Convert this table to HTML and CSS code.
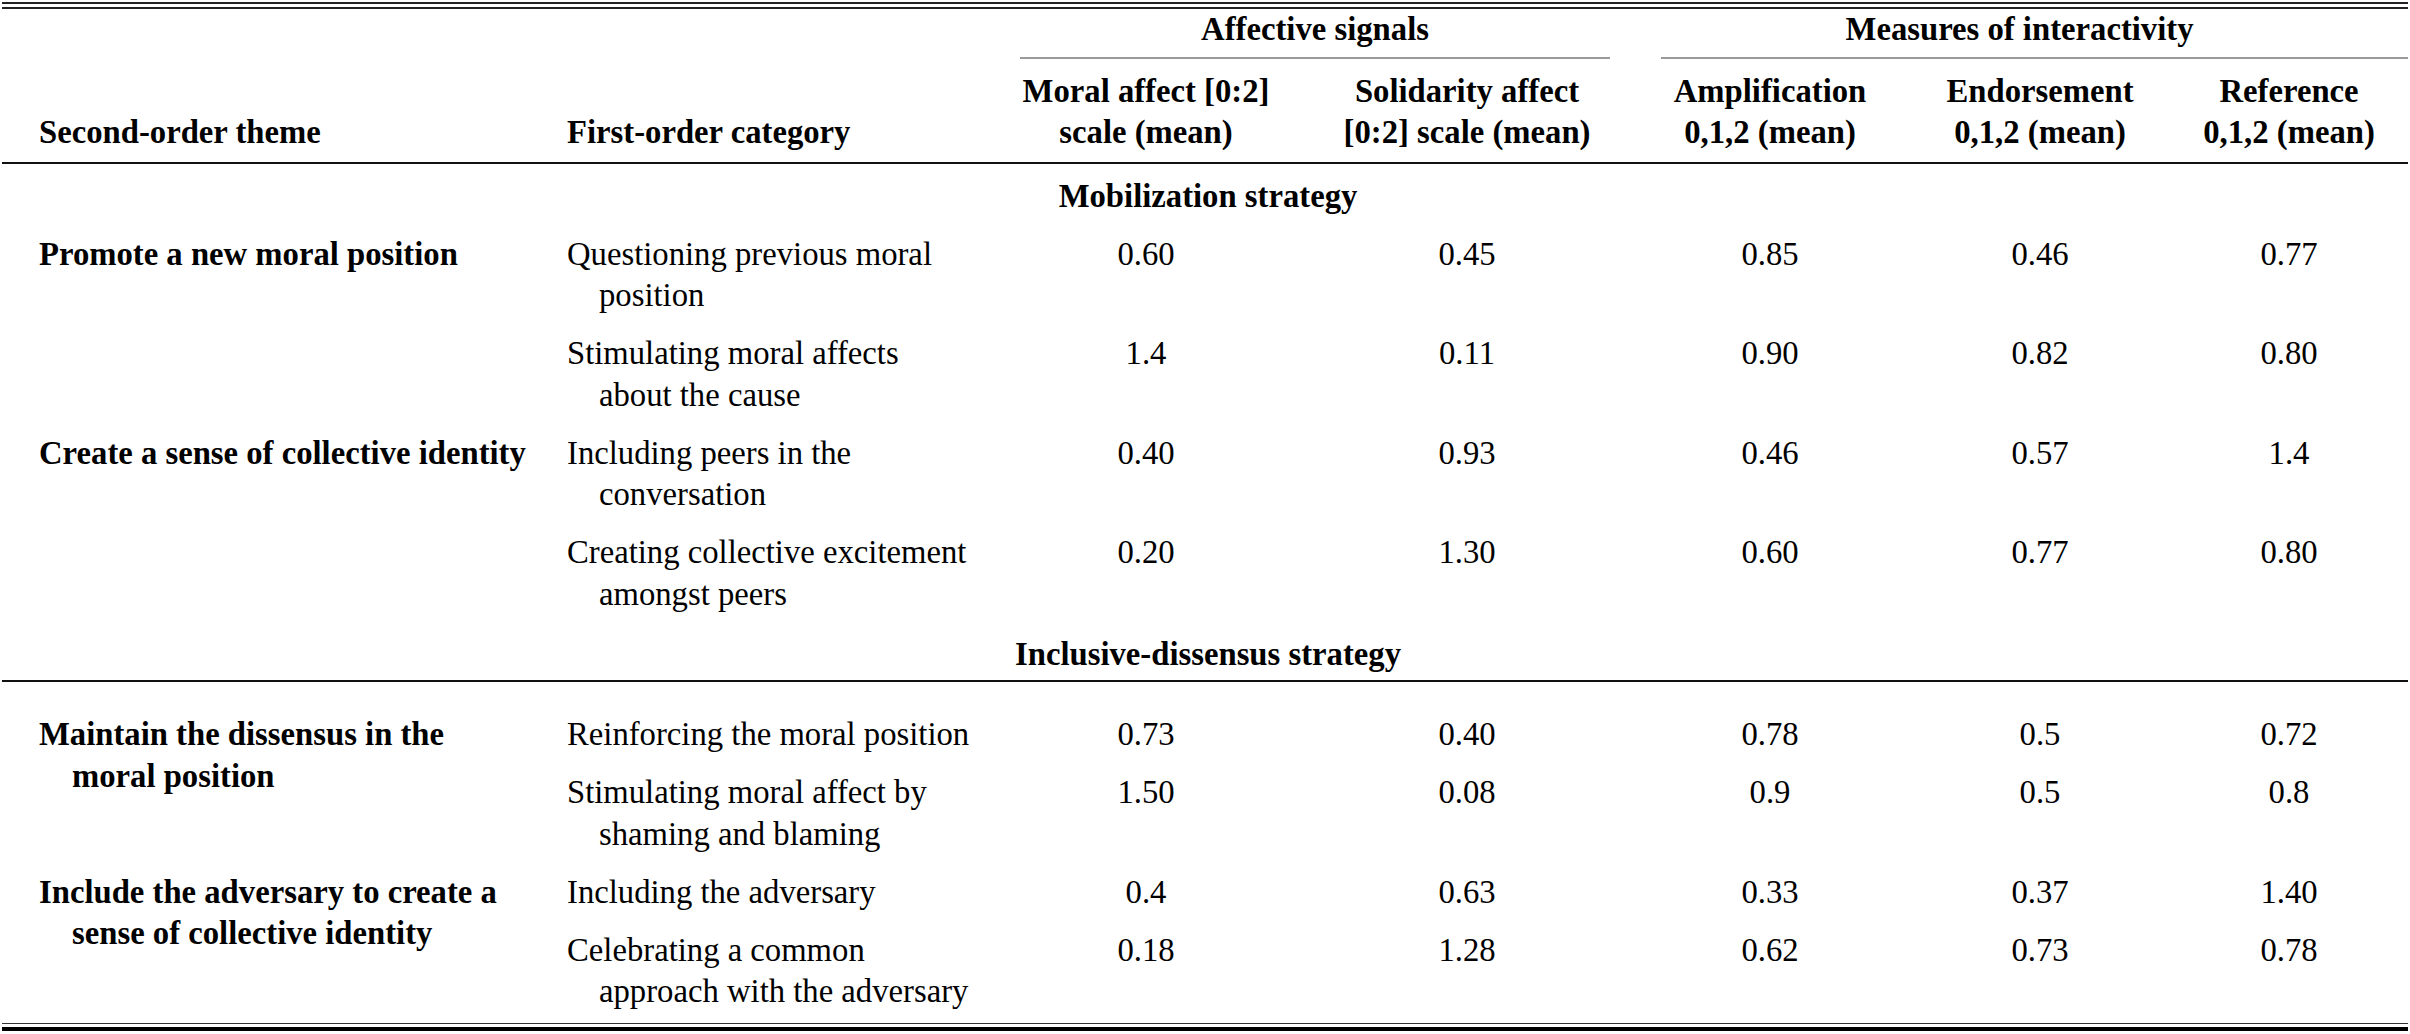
FILE: index.html
```html
<!DOCTYPE html>
<html lang="en">
<head>
<meta charset="utf-8">
<title>Strategies, affective signals and interactivity</title>
<link rel="stylesheet" href="styles.css">
</head>
<body>
<div class="table-frame">
  <table class="data">
    <colgroup>
      <col class="c-theme">
      <col class="c-cat">
      <col class="c-moral">
      <col class="c-sol">
      <col class="c-amp">
      <col class="c-end">
      <col class="c-ref">
    </colgroup>
    <thead>
      <tr class="group-row">
        <th rowspan="2" class="theme-head">Second-order theme</th>
        <th rowspan="2" class="cat-head">First-order category</th>
        <th colspan="2" class="group"><div class="group-label affective">Affective signals</div></th>
        <th colspan="3" class="group"><div class="group-label measures">Measures of interactivity</div></th>
      </tr>
      <tr class="sub-row">
        <th>Moral affect [0:2]<br>scale (mean)</th>
        <th>Solidarity affect<br>[0:2] scale (mean)</th>
        <th>Amplification<br>0,1,2 (mean)</th>
        <th>Endorsement<br>0,1,2 (mean)</th>
        <th>Reference<br>0,1,2 (mean)</th>
      </tr>
    </thead>
    <tbody>
      <tr class="section">
        <td colspan="7">Mobilization strategy</td>
      </tr>
      <tr>
        <td rowspan="2" class="theme">Promote a new moral position</td>
        <td class="cat">Questioning previous moral<br>position</td>
        <td class="num">0.60</td>
        <td class="num">0.45</td>
        <td class="num">0.85</td>
        <td class="num">0.46</td>
        <td class="num">0.77</td>
      </tr>
      <tr>
        <td class="cat">Stimulating moral affects<br>about the cause</td>
        <td class="num">1.4</td>
        <td class="num">0.11</td>
        <td class="num">0.90</td>
        <td class="num">0.82</td>
        <td class="num">0.80</td>
      </tr>
      <tr>
        <td rowspan="2" class="theme">Create a sense of collective identity</td>
        <td class="cat">Including peers in the<br>conversation</td>
        <td class="num">0.40</td>
        <td class="num">0.93</td>
        <td class="num">0.46</td>
        <td class="num">0.57</td>
        <td class="num">1.4</td>
      </tr>
      <tr>
        <td class="cat">Creating collective excitement<br>amongst peers</td>
        <td class="num">0.20</td>
        <td class="num">1.30</td>
        <td class="num">0.60</td>
        <td class="num">0.77</td>
        <td class="num">0.80</td>
      </tr>
      <tr class="section section-rule">
        <td colspan="7">Inclusive-dissensus strategy</td>
      </tr>
      <tr class="gap-row">
        <td rowspan="2" class="theme">Maintain the dissensus in the<br>moral position</td>
        <td class="cat">Reinforcing the moral position</td>
        <td class="num">0.73</td>
        <td class="num">0.40</td>
        <td class="num">0.78</td>
        <td class="num">0.5</td>
        <td class="num">0.72</td>
      </tr>
      <tr>
        <td class="cat">Stimulating moral affect by<br>shaming and blaming</td>
        <td class="num">1.50</td>
        <td class="num">0.08</td>
        <td class="num">0.9</td>
        <td class="num">0.5</td>
        <td class="num">0.8</td>
      </tr>
      <tr>
        <td rowspan="2" class="theme">Include the adversary to create a<br>sense of collective identity</td>
        <td class="cat">Including the adversary</td>
        <td class="num">0.4</td>
        <td class="num">0.63</td>
        <td class="num">0.33</td>
        <td class="num">0.37</td>
        <td class="num">1.40</td>
      </tr>
      <tr class="last-row">
        <td class="cat">Celebrating a common<br>approach with the adversary</td>
        <td class="num">0.18</td>
        <td class="num">1.28</td>
        <td class="num">0.62</td>
        <td class="num">0.73</td>
        <td class="num">0.78</td>
      </tr>
    </tbody>
  </table>
</div>
</body>
</html>
```

FILE: styles.css
```css
html, body {
  margin: 0;
  padding: 0;
  background: #ffffff;
}

body {
  font-family: "Liberation Serif", "Times New Roman", serif;
  font-size: 32.7px;
  color: #000000;
}

.table-frame {
  margin: 2px 2px 0 2px;
  border-top: 2px solid #222222;
  border-bottom: 4px solid #000000;
  padding: 3px 0;
}

.data {
  width: 100%;
  table-layout: fixed;
  border-collapse: separate;
  border-spacing: 0;
  border-top: 2px solid #222222;
  border-bottom: 1px solid #333333;
}

.c-theme { width: 549px; }
.c-cat   { width: 437px; }
.c-moral { width: 316px; }
.c-sol   { width: 326px; }
.c-amp   { width: 280px; }
.c-end   { width: 260px; }
.c-ref   { width: 238px; }

.data th,
.data td {
  line-height: 41.5px;
  white-space: nowrap;
}

/* ---------- header ---------- */
.data th {
  font-weight: bold;
  text-align: center;
}

.data .group-row .group {
  padding: 0;
  vertical-align: top;
}

.group-label {
  padding-bottom: 6px;
  border-bottom: 2px solid #9a9a9a;
}

.group-label.affective {
  margin: 0 20px 0 32px;
}

.group-label.measures {
  margin: 0 0 0 31px;
  padding-right: 30px;
}

.data .sub-row th {
  padding: 12px 16px 8px 16px;
  vertical-align: bottom;
  border-bottom: 2px solid #111111;
}

.data th.theme-head,
.data th.cat-head {
  text-align: left;
  vertical-align: bottom;
  padding: 0 16px 8px 16px;
  border-bottom: 2px solid #111111;
}

.data th.theme-head {
  padding-left: 37px;
}

/* ---------- body ---------- */
.data td {
  padding: 13px 16px 3.5px 16px;
  vertical-align: top;
}

.data td.theme {
  font-weight: bold;
  padding-left: 70px;
  text-indent: -33px;
}

.data td.cat {
  padding-left: 48px;
  text-indent: -32px;
}

.data td.num {
  text-align: center;
}

.data .section td {
  font-weight: bold;
  text-align: center;
  padding: 12px 0 3.5px 6px;
}

.data .section.section-rule td {
  padding-top: 15px;
  padding-bottom: 5px;
  border-bottom: 2px solid #111111;
}

.data .gap-row td {
  padding-top: 32px;
}

.data .last-row td {
  padding-bottom: 10px;
}
```
